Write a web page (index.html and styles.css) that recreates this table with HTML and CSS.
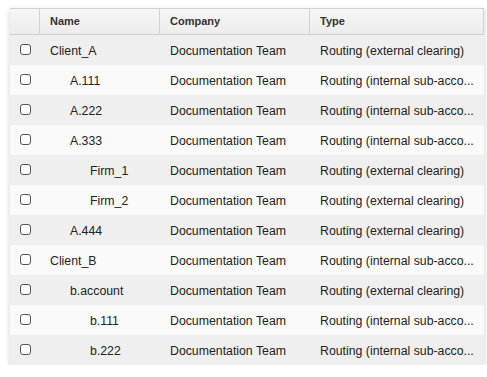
FILE: index.html
```html
<!DOCTYPE html>
<html>
<head>
<meta charset="utf-8">
<link rel="stylesheet" href="styles.css">
</head>
<body>
<div class="panel">
  <div class="row head">
    <div class="c check"></div>
    <div class="c name">Name</div>
    <div class="c company">Company</div>
    <div class="c type">Type</div>
  </div>
  <div class="row odd"><div class="c check"><span class="box"></span></div><div class="c name l0">Client_A</div><div class="c company">Documentation Team</div><div class="c type">Routing (external clearing)</div></div>
  <div class="row"><div class="c check"><span class="box"></span></div><div class="c name l1">A.111</div><div class="c company">Documentation Team</div><div class="c type">Routing (internal sub-acco...</div></div>
  <div class="row odd"><div class="c check"><span class="box"></span></div><div class="c name l1">A.222</div><div class="c company">Documentation Team</div><div class="c type">Routing (internal sub-acco...</div></div>
  <div class="row"><div class="c check"><span class="box"></span></div><div class="c name l1">A.333</div><div class="c company">Documentation Team</div><div class="c type">Routing (internal sub-acco...</div></div>
  <div class="row odd"><div class="c check"><span class="box"></span></div><div class="c name l2">Firm_1</div><div class="c company">Documentation Team</div><div class="c type">Routing (external clearing)</div></div>
  <div class="row"><div class="c check"><span class="box"></span></div><div class="c name l2">Firm_2</div><div class="c company">Documentation Team</div><div class="c type">Routing (external clearing)</div></div>
  <div class="row odd"><div class="c check"><span class="box"></span></div><div class="c name l1">A.444</div><div class="c company">Documentation Team</div><div class="c type">Routing (external clearing)</div></div>
  <div class="row"><div class="c check"><span class="box"></span></div><div class="c name l0">Client_B</div><div class="c company">Documentation Team</div><div class="c type">Routing (internal sub-acco...</div></div>
  <div class="row odd"><div class="c check"><span class="box"></span></div><div class="c name l1">b.account</div><div class="c company">Documentation Team</div><div class="c type">Routing (external clearing)</div></div>
  <div class="row"><div class="c check"><span class="box"></span></div><div class="c name l2">b.111</div><div class="c company">Documentation Team</div><div class="c type">Routing (internal sub-acco...</div></div>
  <div class="row odd"><div class="c check"><span class="box"></span></div><div class="c name l2">b.222</div><div class="c company">Documentation Team</div><div class="c type">Routing (internal sub-acco...</div></div>
</div>
</body>
</html>
```
FILE: styles.css
```css
html, body { margin: 0; padding: 0; background: #ffffff; }
body { font-family: "Liberation Sans", Arial, sans-serif; color: #222; }
.panel {
  margin: 8px 0 0 10px;
  width: 474px;
  box-shadow: 0 2px 5px rgba(0,0,0,0.2);
  background: #fafafa;
}
.row {
  display: grid;
  grid-template-columns: 30px 120px 150px 174px;
  height: 30px;
  align-items: center;
  font-size: 12.3px;
  background: #fafafa;
}
.row.odd { background: #efefef; }
.row.head {
  height: 27px;
  box-sizing: border-box;
  border-top: 1px solid #d3d3d3;
  border-bottom: 1px solid #cfcfcf;
  border-right: 1px solid #d3d3d3;
  background: linear-gradient(#f6f6f6, #ececec);
  font-weight: bold;
  font-size: 11px;
  color: #333;
  align-items: stretch;
}
.head .c { display: flex; align-items: center; border-right: 1px solid #d3d3d3; padding-top: 0; padding-bottom: 2px; }
.head .c:last-child { border-right: none; }
.c { padding: 2px 4px 0 10px; white-space: nowrap; }
.c.check { padding: 0; display: flex; justify-content: center; align-items: center; height: 100%; }
.head .c.check { border-right: 1px solid #d3d3d3; }
.name.l1 { padding-left: 30px; }
.name.l2 { padding-left: 50px; }
.box {
  width: 9px; height: 9px;
  border: 1px solid #555;
  border-radius: 3px;
  background: #fff;
  margin-left: 1px;
  margin-top: -2px;
}
```
